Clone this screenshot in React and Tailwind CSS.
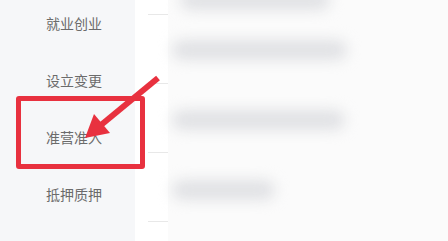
const menu = ['就业创业', '设立变更', '准营准入', '抵押质押']

const bars = [
  { top: 'mt-[-10px]', w: 'w-[150px] ml-[12px]' },
  { top: 'mt-[30px]', w: 'w-[175px] ml-[4px]' },
  { top: 'mt-[50px]', w: 'w-[173px] ml-[4px]' },
  { top: 'mt-[50px]', w: 'w-[103px] ml-[4px]' },
]

export default function App() {
  return (
    <div className="relative w-[448px] h-[241px] overflow-hidden bg-white flex" style={{ fontFamily: '"Noto Sans CJK SC", "Noto Sans", sans-serif' }}>
      {/* Sidebar */}
      <div className="w-[135px] h-full bg-[#f6f7f9] flex flex-col pt-[13px] gap-[37px] pl-[46px]">
        {menu.map(m => (
          <div key={m} className="h-[20px] leading-[20px] text-[14px] text-[#6b6b6b]">
            {m}
          </div>
        ))}
      </div>

      {/* Divider column */}
      <div className="w-[33px] h-full flex flex-col pt-[14px] gap-[68px] pl-[13px]">
        {[0, 1, 2, 3].map(i => (
          <div key={i} className="h-px w-[20px] bg-[#e8e8e8]" />
        ))}
      </div>

      {/* Blurred content */}
      <div className="flex-1 h-full bg-[#fbfbfb] flex flex-col">
        {bars.map((b, i) => (
          <div key={i} className={`${b.top} ${b.w} h-[20px] rounded-full bg-[#e0e1e4] blur-[7px]`} />
        ))}
      </div>

      {/* Annotation box */}
      <div className="absolute left-[16px] top-[96px] w-[129px] h-[73px] border-[5px] border-[#e8313f] rounded-[3px]" />

      {/* Annotation arrow */}
      <svg className="absolute left-0 top-0" width="448" height="241" viewBox="0 0 448 241">
        <line x1="158" y1="78" x2="101" y2="125" stroke="#e8313f" strokeWidth="6" />
        <polygon points="85,138 110,133 94,114" fill="#e8313f" />
      </svg>
    </div>
  )
}
